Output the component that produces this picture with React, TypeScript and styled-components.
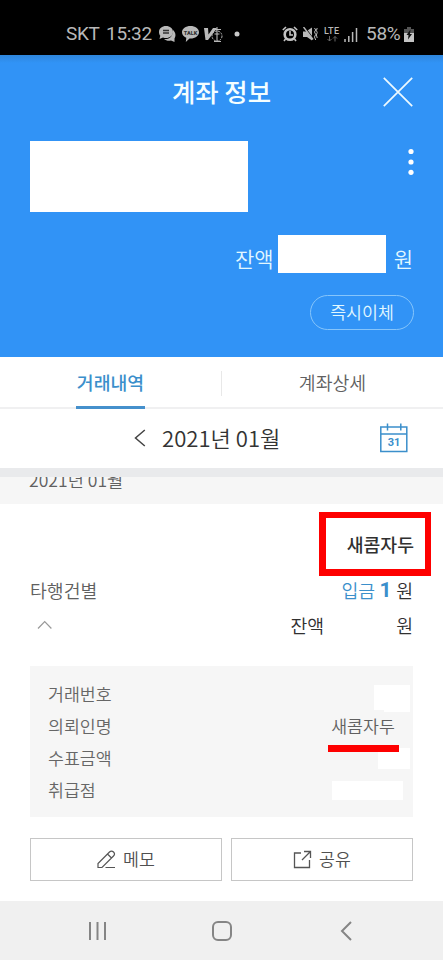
import React from "react";
import styled, { createGlobalStyle } from "styled-components";

const GlobalStyle = createGlobalStyle`
  * { box-sizing: border-box; }
  body { margin: 0; background: #fff; }
  svg { display: block; flex: none; }
`;

const Screen = styled.div`
  width: 443px;
  height: 960px;
  display: flex;
  flex-direction: column;
  overflow: hidden;
  background: #fff;
  font-family: "Noto Sans CJK KR", sans-serif;
`;

const Text = styled.span<{ $size: number; $color: string; $weight?: number }>`
  font-size: ${(p) => p.$size}px;
  color: ${(p) => p.$color};
  font-weight: ${(p) => p.$weight ?? 350};
  line-height: 30px;
  white-space: pre;
`;

const StatusBar = styled.header`
  height: 55px;
  flex: none;
  padding: 13px 29px 0 66px;
  display: flex;
  justify-content: space-between;
  align-items: center;
  background: #000;
  color: #b9b9b9;
  font-family: Roboto, sans-serif;
  font-size: 19px;
`;

const StatusGroup = styled.div`
  display: flex;
  align-items: center;
`;

const StatusText = styled.span<{ $w: number }>`
  width: ${(p) => p.$w}px;
  line-height: 24px;
  letter-spacing: -0.3px;
  white-space: pre;
`;

const StatusIcon = styled.svg<{ $gap?: number }>`
  margin-right: ${(p) => p.$gap ?? 0}px;
`;

const Hero = styled.section`
  height: 302px;
  flex: none;
  padding: 0 30px;
  background: linear-gradient(#2e86dc 0, #3193f6 8px, #3193f6 100%);
`;

const TitleBar = styled.div`
  height: 74px;
  display: grid;
  grid-template-columns: 1fr auto 1fr;
  align-items: center;
`;

const CloseButton = styled.button`
  grid-column: 3;
  justify-self: end;
  padding: 0;
  border: 0;
  background: none;
`;

const Title = styled.h1`
  grid-column: 2;
  margin: 0 0 2px;
  color: #f4feff;
  font-size: 25.4px;
  font-weight: 500;
  line-height: 36px;
`;

const AccountRow = styled.div`
  height: 94px;
  margin-right: -1px;
  padding-top: 12px;
  display: flex;
  justify-content: space-between;
  align-items: flex-start;
`;

const Redaction = styled.span<{ $w: number; $h: number }>`
  width: ${(p) => p.$w}px;
  height: ${(p) => p.$h}px;
  flex: none;
  background: #fff;
`;

const BalanceRow = styled.div`
  height: 60px;
  padding-top: 12px;
  display: flex;
  justify-content: flex-end;
  gap: 4px;

  & > span:first-child, & > span:last-child { margin-top: 8px; }
  & > span:last-child { margin-left: 4px; }
`;

const TransferButton = styled.button`
  display: block;
  width: 104px;
  height: 35px;
  margin: 12px -1px 0 auto;
  padding: 0 0 2px;
  border: 1px solid #86c5fb;
  border-radius: 18px;
  background: none;
  color: #e2f8ff;
  font: 350 17.3px/31px "Noto Sans CJK KR", sans-serif;
`;

const Tabs = styled.nav`
  height: 52px;
  flex: none;
  display: grid;
  grid-template-columns: 221px 1px 221px;
  border-bottom: 2px solid #f0f0f1;
`;

const Tab = styled.div<{ $active?: boolean }>`
  justify-self: center;
  width: 69px;
  height: 52px;
  padding-top: 10px;
  display: flex;
  justify-content: center;
  border-bottom: 3px solid ${(p) => (p.$active ? "#4590cc" : "transparent")};
`;

const TabDivider = styled.i`
  height: 25px;
  margin-top: 14px;
  background: #e8e8e8;
`;

const MonthBar = styled.div`
  height: 59px;
  flex: none;
  padding: 0 35px 1px 134px;
  display: flex;
  align-items: center;

  & > svg:last-child { margin-left: auto; }
`;

const MonthLabel = styled.span`
  margin: 0 0 2px 16px;
  font-size: 22.1px;
  font-weight: 350;
  color: #333;
  line-height: 32px;
`;

const SectionHeader = styled.div`
  height: 36px;
  flex: none;
  padding-left: 29px;
  border-top: 9px solid #e9eaec;
  background: #f6f6f6;
  overflow: hidden;

  & > span { display: block; margin-top: -12px; }
`;

const Entry = styled.article`
  height: 397px;
  flex: none;
  padding: 8px 30px 0;
`;

const NameHighlight = styled.div`
  width: 112px;
  height: 64px;
  margin: 0 -18px 0 auto;
  padding: 11px 11px 0 0;
  display: flex;
  justify-content: flex-end;
  border: solid #fe0000;
  border-width: 6px 6px 7px 7px;
`;

const EntryRow = styled.div<{ $h: number }>`
  height: ${(p) => p.$h}px;
  display: flex;
  justify-content: space-between;
  align-items: center;
`;

const Amount = styled.div<{ $gap: number }>`
  display: flex;
  align-items: center;
  gap: ${(p) => p.$gap}px;
`;

const AmountValue = styled.strong`
  font: 700 21px/30px Roboto, sans-serif;
  color: #3b8fcb;
`;

const Details = styled.dl`
  height: 151px;
  margin: 20px 0 21px;
  padding: 13px 3px 0 18px;
  background: #f6f6f6;
`;

const DetailRow = styled.div`
  height: 32px;
  display: flex;
  justify-content: space-between;
`;

const DetailTerm = styled.dt`
  color: #666;
  font-size: 17.3px;
  font-weight: 350;
  line-height: 30px;
`;

const DetailValue = styled.dd<{ $top: number; $right?: number }>`
  margin: ${(p) => p.$top}px ${(p) => p.$right ?? 0}px 0 0;
  display: flex;
  align-items: flex-start;
`;

const Underlined = styled.span`
  height: 41px;
  width: 71px;
  padding-right: 1px;
  display: flex;
  justify-content: center;
  border-bottom: 7px solid #fe0000;
  z-index: 1;
`;

const Actions = styled.div`
  display: grid;
  grid-template-columns: 192px 182px;
  justify-content: space-between;
`;

const ActionButton = styled.button`
  height: 43px;
  padding: 0 0 1px;
  display: flex;
  justify-content: center;
  align-items: center;
  gap: 7px;
  border: 1.5px solid #c6c6c6;
  background: #fff;
  font-family: inherit;
`;

const NavBar = styled.footer`
  height: 59px;
  flex: none;
  padding: 1px 91px 0 88px;
  display: grid;
  grid-template-columns: 124px 1fr auto;
  align-items: center;
  background: #f0f0f0;
`;

const ChatIcon = () => (
  <StatusIcon width="17" height="16" viewBox="0 0 17 16" $gap={6}>
    <path d="M14 4c3 3 3 6 1.500 8.500V16l-3.500-1.500c-3 .7-5 0-7-1.500 6 .5 9-3 9-9Z" fill="#b9b9b9" />
    <path d="M7 0c4 0 7 2.500 7 6s-3 6-7 6c-1 0-2-.1-3-.5L.5 13l.8-3.300C.4 8.700 0 7.500 0 6c0-3.500 3-6 7-6Z" fill="#b9b9b9" />
    <path d="M4 4.500h6M4 7h6" stroke="#333" strokeWidth="1.300" />
  </StatusIcon>
);

const TalkIcon = () => (
  <StatusIcon width="17" height="16" viewBox="0 0 17 16" $gap={5}>
    <path d="M8.500 0C13.200 0 17 2.700 17 6.200s-3.800 6.300-8.500 6.300h-1L3.800 16l.5-4.300C1.700 10.600 0 8.700 0 6.200 0 2.700 3.800 0 8.500 0Z" fill="#b9b9b9" />
    <text x="8.500" y="8.500" textAnchor="middle" fontFamily="Roboto" fontWeight="900" fontSize="5.500" fill="#333">TALK</text>
  </StatusIcon>
);

const VaccineIcon = () => (
  <StatusIcon width="19" height="17" viewBox="0 0 19 17" $gap={11} fill="none" stroke="#b9b9b9">
    <path d="M0 2h4l.5 6.500L9 2h4L4 14H1.500Z" fill="#b9b9b9" stroke="none" />
    <circle cx="13" cy="10" r="5" strokeDasharray="2 1" />
    <path d="M9 3.500h8M13 1v14M10.500 8h5M10 15.500h7" strokeWidth="1.100" />
  </StatusIcon>
);

const AlarmIcon = () => (
  <StatusIcon width="16" height="16" viewBox="0 0 16 16" $gap={5}>
    <circle cx="8" cy="8.500" r="5.300" fill="none" stroke="#c4c4c4" strokeWidth="2.600" />
    <path d="M8 5v4h3M.8 4 4 1M15.200 4 12 1M3.500 13 2 15M12.500 13l1.500 2" fill="none" stroke="#c4c4c4" strokeWidth="1.600" />
  </StatusIcon>
);

const MuteIcon = () => (
  <StatusIcon width="15" height="15" viewBox="0 0 15 15" $gap={6}>
    <path d="M0 4.500h3l6-4v13l-5-3.500H0Z" fill="#b9b9b9" />
    <path d="M1.500 0 11 12.500" stroke="#000" strokeWidth="1.200" />
    <path d="M.5 0 10 12.500" stroke="#b9b9b9" strokeWidth="1.400" />
    <path d="m11.500 1 1.200 2-1.200 2 1.200 2.500-1.200 2.500 1.200 3M14.200 1l-.8 2.500.8 2-.8 2.500.8 3" fill="none" stroke="#b9b9b9" />
  </StatusIcon>
);

const LteIcon = () => (
  <StatusIcon width="16" height="17" viewBox="0 0 16 17" $gap={4}>
    <text x="0" y="8" fontFamily="Roboto" fontSize="9" fontWeight="500" textLength="15" fill="#b9b9b9">LTE</text>
    <path d="M5.500 10v5M3.500 13l2 2 2-2M11 15.500v-5M9 12.500l2-2 2 2" fill="none" stroke="#666" />
  </StatusIcon>
);

const SignalIcon = () => (
  <StatusIcon width="14" height="15" viewBox="0 0 14 15" $gap={8}>
    <path d="M1 12v3M4.800 9v6M8.600 5v10M12.500 1v14" stroke="#b9b9b9" strokeWidth="1.500" />
  </StatusIcon>
);

const BatteryIcon = () => (
  <StatusIcon width="10" height="15" viewBox="0 0 10 15">
    <path d="M3 0h4v2h3v4H0V2h3Z" fill="#555" />
    <path d="M0 6h10v9H0Z" fill="#c4c4c4" />
    <path d="M6.500 2.500 2.500 8h2L4 12.500 8 7H6Z" fill="#111" />
  </StatusIcon>
);

export default function App() {
  return (
    <Screen>
      <GlobalStyle />
      <StatusBar>
        <StatusGroup>
          <StatusText $w={40}>SKT</StatusText>
          <StatusText $w={53}>15:32</StatusText>
          <ChatIcon />
          <TalkIcon />
          <VaccineIcon />
          <svg width="6" height="6"><circle cx="3" cy="3" r="2.500" fill="#c8c8c8" /></svg>
        </StatusGroup>
        <StatusGroup>
          <AlarmIcon />
          <MuteIcon />
          <LteIcon />
          <SignalIcon />
          <StatusText $w={38}>58%</StatusText>
          <BatteryIcon />
        </StatusGroup>
      </StatusBar>

      <Hero>
        <TitleBar>
          <Title>계좌 정보</Title>
          <CloseButton aria-label="닫기">
            <svg width="30" height="30" fill="none" stroke="#edfaff" strokeWidth="1.700">
              <path d="M.8.800 29.200 29.200M29.200.8.800 29.200" />
            </svg>
          </CloseButton>
        </TitleBar>
        <AccountRow>
          <Redaction $w={218} $h={71} />
          <svg width="6" height="42" fill="#fff">
            <circle cx="3" cy="10.500" r="2.600" />
            <circle cx="3" cy="21" r="2.600" />
            <circle cx="3" cy="31.300" r="2.600" />
          </svg>
        </AccountRow>
        <BalanceRow>
          <Text $size={21} $color="#e2f8ff">잔액</Text>
          <Redaction $w={108} $h={38} />
          <Text $size={21} $color="#e2f8ff">원</Text>
        </BalanceRow>
        <TransferButton>즉시이체</TransferButton>
      </Hero>

      <Tabs>
        <Tab $active>
          <Text $size={18.3} $color="#3b8fcb" $weight={500}>거래내역</Text>
        </Tab>
        <TabDivider />
        <Tab>
          <Text $size={18.3} $color="#606060">계좌상세</Text>
        </Tab>
      </Tabs>

      <MonthBar>
        <svg width="12" height="18" fill="none" stroke="#444" strokeWidth="1.500">
          <path d="M10.800 1 1.500 9l9.300 8" />
        </svg>
        <MonthLabel>2021년 01월</MonthLabel>
        <svg width="28" height="30" fill="none" stroke="#3b8fcb" strokeWidth="1.500">
          <path d="M.8 4h26v24.500H.800ZM.8 11h26M7.500.500v7M20.800.500v7" />
          <text x="14" y="23.300" textAnchor="middle" fontFamily="Roboto" fontWeight="700" fontSize="11" fill="#3b8fcb" stroke="none">31</text>
        </svg>
      </MonthBar>

      <SectionHeader>
        <Text $size={17.6} $color="#606060">2021년 01월</Text>
      </SectionHeader>

      <Entry>
        <NameHighlight>
          <Text $size={18.3} $color="#303030" $weight={500}>새콤자두</Text>
        </NameHighlight>
        <EntryRow $h={28}>
          <Text $size={18.3} $color="#606060">타행건별</Text>
          <Amount $gap={4.5}>
            <Text $size={18.3} $color="#3b8fcb">입금</Text>
            <AmountValue>1</AmountValue>
            <Text $size={18.3} $color="#303030">원</Text>
          </Amount>
        </EntryRow>
        <EntryRow $h={42}>
          <svg width="30" height="10" fill="none" stroke="#999" strokeWidth="1.200">
            <path d="m8 8.500 6.700-7 6.700 7" />
          </svg>
          <Amount $gap={72}>
            <Text $size={18.3} $color="#303030">잔액</Text>
            <Text $size={18.3} $color="#303030">원</Text>
          </Amount>
        </EntryRow>

        <Details>
          <DetailRow>
            <DetailTerm>거래번호</DetailTerm>
            <DetailValue $top={6}>
              <Redaction $w={10} $h={25} />
              <Redaction $w={26} $h={27} />
            </DetailValue>
          </DetailRow>
          <DetailRow>
            <DetailTerm>의뢰인명</DetailTerm>
            <DetailValue $top={0} $right={11}>
              <Underlined>
                <Text $size={17.3} $color="#606060">새콤자두</Text>
              </Underlined>
            </DetailValue>
          </DetailRow>
          <DetailRow>
            <DetailTerm>수표금액</DetailTerm>
            <DetailValue $top={5}>
              <Redaction $w={32} $h={21} />
            </DetailValue>
          </DetailRow>
          <DetailRow>
            <DetailTerm>취급점</DetailTerm>
            <DetailValue $top={6} $right={7}>
              <Redaction $w={71} $h={19} />
            </DetailValue>
          </DetailRow>
        </Details>

        <Actions>
          <ActionButton>
            <svg width="19" height="19" fill="none" stroke="#555" strokeWidth="1.200">
              <path d="M1 17.500v-4L12.500 2q2-2 4 0t0 4L5 17.500ZM10.500 4l4 4M8.500 17.500H18" />
            </svg>
            <Text $size={17.3} $color="#505050">메모</Text>
          </ActionButton>
          <ActionButton>
            <svg width="19" height="19" fill="none" stroke="#555" strokeWidth="1.300">
              <path d="M8 3H1.500v14.500h15V10M11 1.500h6.500V8M17.500 1.500 9 10" />
            </svg>
            <Text $size={17.3} $color="#505050">공유</Text>
          </ActionButton>
        </Actions>
      </Entry>

      <NavBar>
        <svg width="19" height="20" stroke="#858585" strokeWidth="2">
          <path d="M2 1v18M9.500 1v18M17 1v18" />
        </svg>
        <svg width="20" height="20" fill="none" stroke="#858585" strokeWidth="2">
          <rect x="1" y="1" width="18" height="18" rx="5" />
        </svg>
        <svg width="12" height="20" fill="none" stroke="#858585" strokeWidth="2">
          <path d="M11 1 2 10l9 9" />
        </svg>
      </NavBar>
    </Screen>
  );
}
